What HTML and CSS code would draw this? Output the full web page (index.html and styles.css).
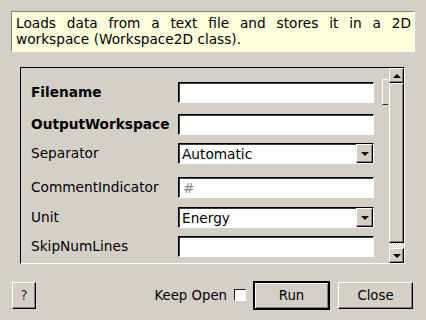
FILE: index.html
```html
<!DOCTYPE html>
<html lang="en">
  <head>
    <meta charset="UTF-8" />
    <title>LoadAscii</title>
    <link rel="stylesheet" href="styles.css">
  </head>
  <body>
    <div class="description">
      <span class="first-line">Loads data from a text file and stores it in a 2D</span>
      workspace (Workspace2D class).
    </div>

    <div class="params">
      <div class="viewport">
        <div class="grid">
          <label class="name bold">Filename</label>
          <div class="field"></div>
          <div class="browse-stub"></div>

          <label class="name bold">OutputWorkspace</label>
          <div class="field"></div>
          <div></div>

          <label class="name">Separator</label>
          <div class="field combo"><span>Automatic</span><span class="drop"><i class="arrow"></i></span></div>
          <div></div>

          <label class="name">CommentIndicator</label>
          <div class="field"><span class="placeholder">#</span></div>
          <div></div>

          <label class="name">Unit</label>
          <div class="field combo"><span>Energy</span><span class="drop"><i class="arrow"></i></span></div>
          <div></div>

          <label class="name">SkipNumLines</label>
          <div class="field"></div>
          <div></div>
        </div>
      </div>
      <div class="scrollbar">
        <div class="sb-btn"><i class="arrow up"></i></div>
        <div class="sb-thumb"></div>
        <div class="sb-trough"></div>
        <div class="sb-btn"><i class="arrow"></i></div>
      </div>
    </div>

    <div class="bottom-bar">
      <button class="btn help" type="button">?</button>
      <div class="spacer"></div>
      <label class="keep-open">Keep Open <span class="check"></span></label>
      <button class="btn run" type="button">Run</button>
      <button class="btn close" type="button">Close</button>
    </div>
  </body>
</html>
```

FILE: styles.css
```css
:root {
  --bg: #d4d0c8;
  --shadow: #808080;
  --dark: #000;
  --light: #fff;
  --tip: #ffffdc;
  --font: "DejaVu Sans", Verdana, sans-serif;
}

body {
  margin: 0;
  width: 426px;
  height: 320px;
  background-color: var(--bg);
  font-family: var(--font);
  font-size: 13.7px;
  color: #000;
  overflow: hidden;
}

.description {
  box-sizing: border-box;
  margin: 11px 11px 0 11px;
  height: 41px;
  padding: 3px 3px 0 4px;
  background-color: var(--tip);
  border: 1px solid;
  border-color: var(--shadow) var(--light) var(--light) var(--shadow);
  line-height: 16px;
}

.first-line {
  display: block;
  text-align: justify;
  text-align-last: justify;
}

.params {
  box-sizing: border-box;
  display: flex;
  margin: 15px 0 0 20px;
  width: 385px;
  height: 197px;
  border: 1px solid;
  border-color: var(--dark) var(--light) var(--light) var(--dark);
}

.viewport {
  flex: 1;
  padding: 14px 0 0 10px;
  overflow: hidden;
}

.grid {
  display: grid;
  grid-template-columns: 147px 196px 14px;
  grid-template-rows: 32px 29px 34px 30px 29px 21px;
  align-items: start;
}

.name {
  line-height: 21px;
  white-space: nowrap;
}

.bold {
  font-weight: bold;
}

.field {
  box-sizing: border-box;
  display: flex;
  align-items: center;
  height: 21px;
  padding-left: 3px;
  background-color: #fff;
  border: 1px solid;
  border-color: var(--dark) var(--light) var(--light) var(--dark);
  box-shadow: inset 1px 1px 0 #404040;
}

.placeholder {
  color: #8a8a8a;
  padding-left: 1px;
}

.combo {
  justify-content: space-between;
  padding-right: 0;
}

.drop {
  box-sizing: border-box;
  display: flex;
  align-items: center;
  justify-content: center;
  width: 17px;
  height: 19px;
  background-color: var(--bg);
  border: 1px solid;
  border-color: var(--light) var(--dark) var(--dark) var(--light);
  box-shadow: inset -1px -1px 0 var(--shadow);
}

.arrow {
  display: block;
  width: 0;
  height: 0;
  border-left: 4px solid transparent;
  border-right: 4px solid transparent;
  border-top: 4px solid #000;
}

.arrow.up {
  border-top: none;
  border-bottom: 4px solid #000;
}

.browse-stub {
  box-sizing: border-box;
  margin: -3px 0 0 8px;
  width: 6px;
  height: 26px;
  border-left: 1px solid var(--light);
  border-top: 1px solid var(--light);
  border-bottom: 1px solid #202020;
}

.scrollbar {
  display: flex;
  flex-direction: column;
  width: 15px;
}

.sb-btn {
  box-sizing: border-box;
  display: flex;
  align-items: center;
  justify-content: center;
  height: 15px;
  background-color: var(--bg);
  border: 1px solid;
  border-color: var(--light) var(--dark) var(--dark) var(--light);
  box-shadow: inset -1px -1px 0 var(--shadow);
}

.sb-thumb {
  flex: 1;
  box-sizing: border-box;
  background-color: var(--bg);
  border: 1px solid;
  border-color: var(--light) var(--dark) var(--dark) var(--light);
  box-shadow: inset -1px -1px 0 var(--shadow);
}

.sb-trough {
  height: 5px;
  background: repeating-conic-gradient(#fff 0 25%, var(--bg) 0 50%) 0 0 / 2px 2px;
}

.bottom-bar {
  display: flex;
  align-items: center;
  margin: 17px 13px 0 12px;
  height: 28px;
  font-size: 13.3px;
}

.spacer {
  flex: 1;
}

.btn {
  box-sizing: border-box;
  height: 27px;
  padding: 0;
  font-family: var(--font);
  font-size: 13.3px;
  color: #000;
  background-color: var(--bg);
  border: 1px solid;
  border-color: var(--light) var(--dark) var(--dark) var(--light);
  box-shadow: inset -1px -1px 0 var(--shadow);
}

.help {
  width: 24px;
  color: #333;
}

.run {
  width: 77px;
  height: 29px;
  margin-left: 7px;
  border-width: 2px;
  border-color: #000;
  box-shadow: inset 1px 1px 0 var(--light), inset -1px -1px 0 var(--shadow);
}

.close {
  width: 75px;
  margin-left: 8px;
}

.keep-open {
  display: flex;
  align-items: center;
  gap: 7px;
}

.check {
  box-sizing: border-box;
  width: 12px;
  height: 12px;
  background-color: #fff;
  border: 1px solid;
  border-color: #202020 var(--light) var(--light) #202020;
}
```
